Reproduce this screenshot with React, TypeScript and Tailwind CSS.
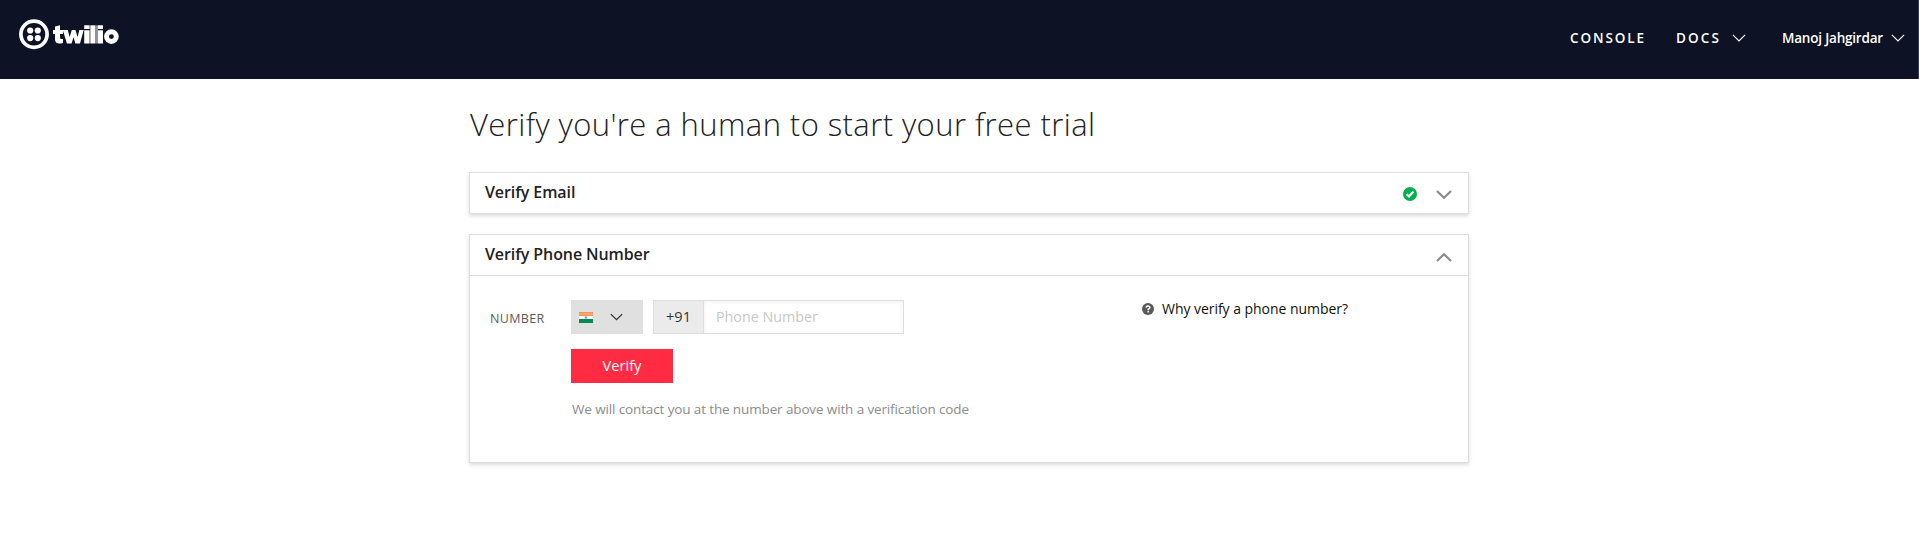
import React from 'react';

type ChevronProps = { className: string; up?: boolean; stroke: number };

function Chevron({ className, up = false, stroke }: ChevronProps) {
  return (
    <svg viewBox="0 0 16 9" className={className} fill="none" stroke="currentColor" strokeWidth={stroke}>
      <path d={up ? 'M1 8 L8 1.2 L15 8' : 'M1 1 L8 7.8 L15 1'} />
    </svg>
  );
}

function Logo() {
  return (
    <a className="mt-[18px] ml-[18px] flex" aria-label="twilio">
      <svg viewBox="0 0 32 32" className="size-8" fill="#fff">
        <circle cx="16" cy="16.3" r="13.1" fill="none" stroke="#fff" strokeWidth="3.7" />
        <circle cx="12.2" cy="12.5" r="3.1" />
        <circle cx="19.8" cy="12.5" r="3.1" />
        <circle cx="12.2" cy="20.1" r="3.1" />
        <circle cx="19.8" cy="20.1" r="3.1" />
      </svg>
      <svg viewBox="0 0 66 20" className="ml-[3px] mt-[7px] h-5 w-[66px]" fill="#fff">
        <path d="M2 1.5 L7 0.2 V5 H10 V9 H7 V12.5 Q7 14.6 10 13.9 V18 Q2 20.2 2 14 V9 H0 V5 H2 Z" />
        <path d="M9.8 5 H14.8 L16.6 12 L18.8 5 H22.4 L24.6 12 L26.3 5 H30.7 L27 18.5 H22.4 L20.5 12.2 L18.6 18.5 H13.9 Z" />
        <path d="M31.2 5.2 H36.6 V18.5 H31.2 Z M31.2 0.3 H36.6 V4 H31.2 Z" />
        <path d="M37.3 0.3 H42 V18.5 H37.3 Z" />
        <path d="M45 5.2 H50 V18.5 H45 Z M45 0.3 H50 V4 H45 Z" />
        <path d="M42 0.3 H45 V18.5 H42 Z" opacity=".55" />
        <circle cx="58.4" cy="11.6" r="4.9" fill="none" stroke="#fff" strokeWidth="4.9" />
      </svg>
    </a>
  );
}

function Header() {
  return (
    <header className="flex h-[79px] items-start justify-between border-r border-[#3b3f50] bg-[#0d1225] text-white">
      <Logo />
      <nav className="mr-[13px] flex h-[76px] items-center text-[13.5px] font-semibold">
        <a className="w-[106px] tracking-[1.9px]">CONSOLE</a>
        <a className="w-[56px] tracking-[2.1px]">DOCS</a>
        <Chevron className="mr-[36px] h-[8px] w-[14px]" stroke={1.3} />
        <a className="w-[109px] whitespace-nowrap tracking-[-0.2px]">Manoj Jahgirdar</a>
        <Chevron className="h-[8px] w-[14px]" stroke={1.3} />
      </nav>
    </header>
  );
}

function IndiaFlag() {
  return (
    <svg viewBox="0 0 14 11" className="h-[11px] w-[14px]">
      <rect width="14" height="4" fill="#f2904f" />
      <rect y="0.7" width="14" height="2.5" fill="#f7a66b" />
      <rect y="4" width="14" height="3.3" fill="#f7f7f7" />
      <rect y="7" width="14" height="4" fill="#068a52" />
      <circle cx="7" cy="5.5" r="1.3" fill="#8d93c9" />
    </svg>
  );
}

const card = 'border border-[#dedede] bg-white shadow-[0_2px_4px_rgba(0,0,0,0.14)]';

export default function App() {
  return (
    <div className="h-[540px] overflow-hidden bg-white font-['Open_Sans',sans-serif] text-[#222]">
      <Header />
      <main className="ml-[469px] w-[1000px]">
        <h1 className="flex h-[93px] items-center pb-0.5 pl-px text-[31px] font-light tracking-[0.42px] whitespace-nowrap">
          Verify you're a human to start your free trial
        </h1>

        <section className={card}>
          <div className="flex h-[40px] items-center pr-4 pl-[15px]">
            <h2 className="flex-1 pb-[3px] text-[16px] font-semibold tracking-[-0.1px]">Verify Email</h2>
            <svg viewBox="0 0 14 14" className="mt-0.5 mr-[19px] size-[14px]">
              <circle cx="7" cy="7" r="7" fill="#00b050" />
              <path d="M3.6 7.2 L6 9.5 L10.5 4.5" fill="none" stroke="#fff" strokeWidth="2.2" />
            </svg>
            <Chevron className="mt-[3px] h-[9px] w-4 text-[#8c8c8c]" stroke={2.2} />
          </div>
        </section>

        <section className={`mt-5 ${card}`}>
          <div className="flex h-[41px] items-center border-b border-[#dedede] pr-4 pl-[15px]">
            <h2 className="flex-1 pb-[3px] text-[16px] font-semibold tracking-[-0.1px]">Verify Phone Number</h2>
            <Chevron className="mt-[5px] h-[9px] w-4 text-[#8c8c8c]" stroke={2.2} up />
          </div>
          <div className="flex h-[186px] pt-6">
            <label className="ml-5 h-[37px] w-[81px] text-[12.5px] leading-[37px] tracking-[0.35px] text-[#5c5c5c]">NUMBER</label>
            <div className="w-[571px]">
              <div className="flex h-[34px]">
                <button className="mr-[10px] flex w-[72px] items-center bg-[#e0e0e0] pl-2 text-[#333]">
                  <IndiaFlag />
                  <Chevron className="ml-[17px] h-[8px] w-[13px]" stroke={1.6} />
                </button>
                <span className="w-[51px] border border-[#dedede] bg-[#ebebeb] text-center text-[14.5px] leading-[31px] text-[#333]">
                  +91
                </span>
                <input
                  placeholder="Phone Number"
                  className="w-[200px] border border-l-0 border-[#dedede] pl-3 text-[14.3px] shadow-[inset_0_1px_4px_rgba(0,0,0,0.06)] placeholder:text-[#c8c8c8]"
                />
              </div>
              <button className="mt-[15px] block h-[34px] w-[102px] bg-[#ff2b43] pb-px text-[14.6px] text-white">
                Verify
              </button>
              <p className="mt-[16px] pl-px text-[13.5px] leading-5 tracking-[-0.13px] whitespace-nowrap text-[#8c8c8c]">
                We will contact you at the number above with a verification code
              </p>
            </div>
            <a className="flex h-[18px] items-center text-[14px] tracking-[-0.04px] whitespace-nowrap text-[#111]">
              <svg viewBox="0 0 12 12" className="mr-2 size-3">
                <circle cx="6" cy="6" r="6" fill="#595959" />
                <path d="M4 4.7 Q4.2 3 6 3 Q7.9 3.1 7.8 4.7 Q7.7 5.7 6.2 6.2 V7.2 M6.2 8 V9.5" fill="none" stroke="#fff" strokeWidth="1.5" />
              </svg>
              <span className="pb-0.5">Why verify a phone number?</span>
            </a>
          </div>
        </section>
      </main>
    </div>
  );
}
